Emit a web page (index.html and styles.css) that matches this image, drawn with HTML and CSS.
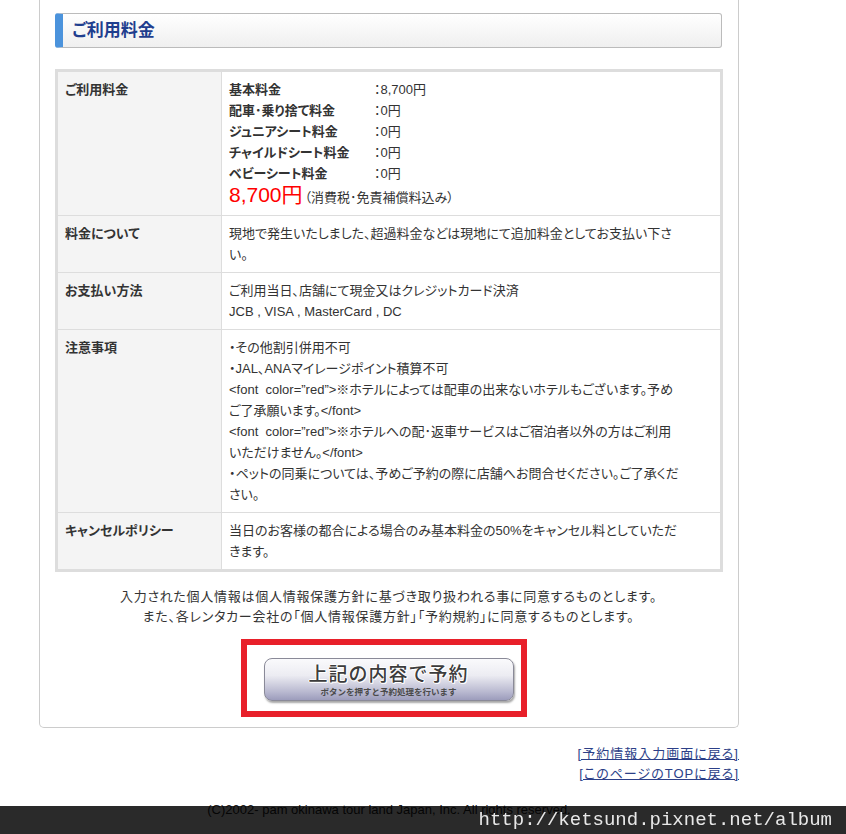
FILE: index.html
```html
<!DOCTYPE html>
<html lang="ja">
<head>
    <meta charset="UTF-8">
    <meta name="viewport" content="width=device-width, initial-scale=1.0">
    <title>ご利用料金</title>
    <link rel="stylesheet" href="styles.css">
</head>
<body>
    <div class="wrapper">
        <div class="content-box">
            <h2 class="section-title">ご利用料金</h2>

            <table class="fee-table">
                <tr>
                    <th>ご利用料金</th>
                    <td>
                        <div class="fee-list">
                            <span class="fee-name">基本料金</span><span>：8,700円</span>
                            <span class="fee-name">配車･乗り捨て料金</span><span>：0円</span>
                            <span class="fee-name">ジュニアシート料金</span><span>：0円</span>
                            <span class="fee-name">チャイルドシート料金</span><span>：0円</span>
                            <span class="fee-name">ベビーシート料金</span><span>：0円</span>
                        </div>
                        <div class="fee-total"><span class="price">8,700円</span>（消費税･免責補償料込み）</div>
                    </td>
                </tr>
                <tr>
                    <th>料金について</th>
                    <td>現地で発生いたしました、超過料金などは現地にて追加料金としてお支払い下さ<br>い。</td>
                </tr>
                <tr>
                    <th>お支払い方法</th>
                    <td>ご利用当日、店舗にて現金又はクレジットカード決済<br>JCB , VISA , MasterCard , DC</td>
                </tr>
                <tr>
                    <th>注意事項</th>
                    <td>
                        ・その他割引併用不可<br>
                        ・JAL、ANAマイレージポイント積算不可<br>
                        &lt;font&nbsp; color=”red”&gt;※ホテルによっては配車の出来ないホテルもございます。予め<br>
                        ご了承願います。&lt;/font&gt;<br>
                        &lt;font&nbsp; color=”red”&gt;※ホテルへの配･返車サービスはご宿泊者以外の方はご利用<br>
                        いただけません。&lt;/font&gt;<br>
                        ・ペットの同乗については、予めご予約の際に店舗へお問合せください。ご了承くだ<br>
                        さい。
                    </td>
                </tr>
                <tr>
                    <th>キャンセルポリシー</th>
                    <td>当日のお客様の都合による場合のみ基本料金の50%をキャンセル料としていただ<br>きます。</td>
                </tr>
            </table>

            <p class="agree-text">
                入力された個人情報は個人情報保護方針に基づき取り扱われる事に同意するものとします。<br>
                また、各レンタカー会社の「個人情報保護方針」「予約規約」に同意するものとします。
            </p>

            <div class="submit-area">
                <div class="highlight">
                    <button class="submit-button">
                        <span class="submit-main">上記の内容で予約</span>
                        <span class="submit-sub">ボタンを押すと予約処理を行います</span>
                    </button>
                </div>
            </div>
        </div>

        <div class="page-links">
            <a href="#">[予約情報入力画面に戻る]</a><br>
            <a href="#">[このページのTOPに戻る]</a>
        </div>

        <p class="copyright">(C)2002- pam okinawa tour land Japan, Inc. All rights reserved.</p>
    </div>

    <div class="watermark">http://ketsund.pixnet.net/album</div>
</body>
</html>
```

FILE: styles.css
```css
body {
    margin: 0;
    background: #fff;
    color: #333;
    font-family: "Liberation Sans", "Noto Sans CJK JP", sans-serif;
    font-size: 13px;
    font-feature-settings: "palt";
}

.wrapper {
    width: 700px;
    margin-left: 39px;
}

.content-box {
    border: 1px solid #ccc;
    border-top: none;
    border-radius: 0 0 5px 5px;
    padding: 13px 16px 10px 15px;
}

.section-title {
    margin: 0;
    height: 33px;
    line-height: 33px;
    padding-left: 9px;
    font-size: 17px;
    font-weight: bold;
    color: #1f3e8e;
    border: 1px solid #bbb;
    border-left: 8px solid #4b93dc;
    border-radius: 3px;
    background: linear-gradient(#fff 0%, #efefef 100%);
}

.fee-table {
    width: 668px;
    margin-top: 21px;
    border-collapse: collapse;
    border: 3px solid #ddd;
}

.fee-table th,
.fee-table td {
    border: 1px solid #ddd;
    padding: 7px 7px 7px;
    line-height: 21px;
    vertical-align: top;
    text-align: left;
}

.fee-table th {
    width: 149px;
    background: #f4f4f4;
    font-weight: bold;
}

.fee-list {
    display: grid;
    grid-template-columns: 145px auto;
}

.fee-name {
    font-weight: bold;
}

.fee-total {
    height: 24px;
    line-height: 24px;
    overflow: hidden;
}

.price {
    color: #f00;
    font-size: 21px;
    line-height: 1;
    margin-right: 2px;
}

.agree-text {
    margin: 15px 0 0;
    line-height: 20px;
    text-align: center;
    letter-spacing: 0.75px;
}

.submit-area {
    display: flex;
    justify-content: center;
    margin-top: 12px;
}

.highlight {
    border: 6px solid #e8202a;
    padding: 13px 7px 10px 17px;
    margin-right: 10px;
}

.submit-button {
    display: flex;
    flex-direction: column;
    align-items: center;
    width: 250px;
    height: 43px;
    padding: 2px 0 0;
    border: 1px solid #8a8a98;
    border-radius: 8px;
    background: linear-gradient(#fafafc 0%, #ececf2 40%, #b9b9d0 80%, #9c9cbc 100%);
    box-shadow: 1px 2px 2px rgba(0,0,0,0.35);
    cursor: pointer;
    font-family: "Noto Sans CJK JP", sans-serif;
    color: #3c3c3c;
}

.submit-main {
    font-size: 19px;
    font-weight: 500;
    line-height: 23px;
    letter-spacing: 1px;
    text-shadow: -1px 0 #fff, 1px 0 #fff, 0 -1px #fff, 0 1px #fff, 1px 1px #fff;
}

.submit-sub {
    font-size: 8.5px;
    font-weight: bold;
    line-height: 14px;
    color: #4a4a4a;
}

.page-links {
    margin-top: 16px;
    text-align: right;
    line-height: 20px;
    letter-spacing: 1px;
}

.page-links a {
    color: #2c3f88;
}

.copyright {
    margin: 16px 0 0;
    text-align: center;
    line-height: 20px;
    color: #222;
}

.watermark {
    position: fixed;
    left: 0;
    right: 0;
    bottom: 0;
    height: 28px;
    line-height: 28px;
    padding-right: 14px;
    text-align: right;
    background: rgba(0,0,0,0.835);
    color: #e8e8e8;
    font-family: "Liberation Mono", monospace;
    font-size: 19px;
}
```
